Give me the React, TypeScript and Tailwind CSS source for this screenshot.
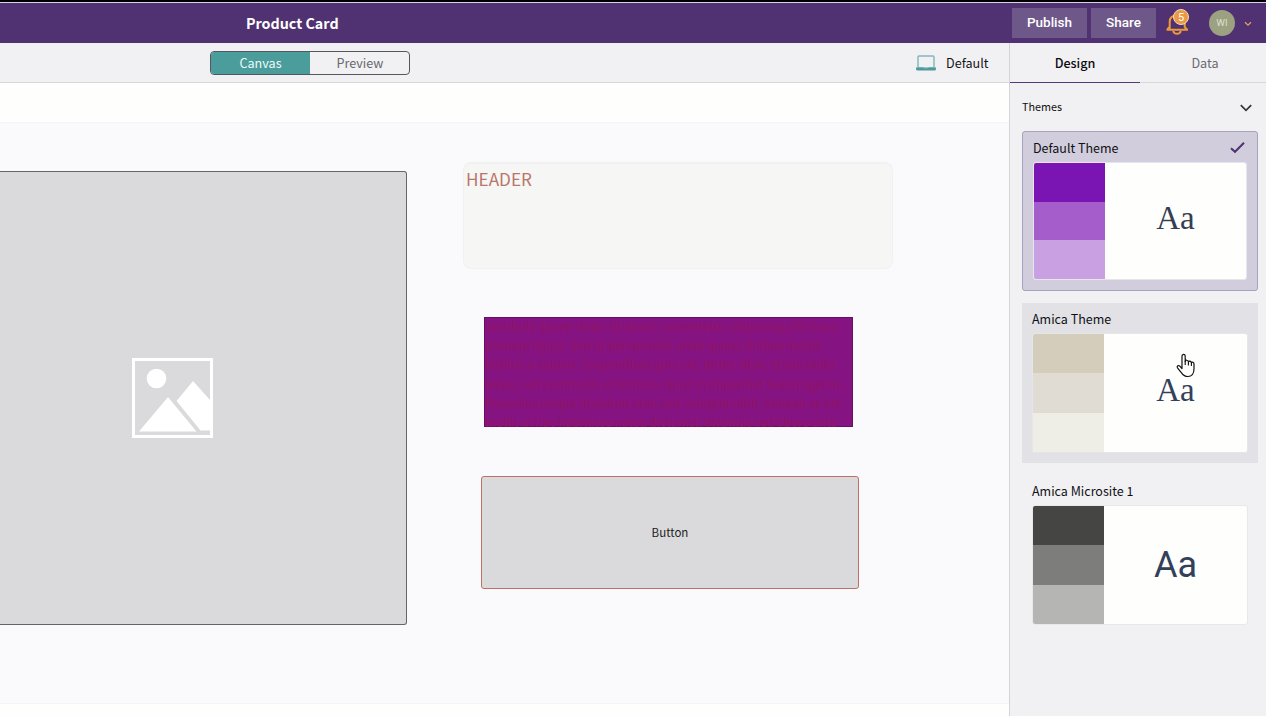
import React from "react";

type Theme = {
  name: string;
  card: string;
  title: string;
  preview: string;
  swatches: string[];
  sample: string;
  selected?: boolean;
  hovered?: boolean;
};

const themes: Theme[] = [
  {
    name: "Default Theme",
    card: "h-[160px] border-[#a9a2bd] bg-[#d2cddd] rounded-[3px] px-[10px]",
    title: "h-[30px] pt-[3px]",
    preview: "h-[118px] border-[#e8e5ef] w-[214px]",
    swatches: ["bg-[#7a15b4]", "bg-[#a45dca]", "bg-[#c9a1e3]"],
    sample: "pb-[6px] font-['Liberation_Serif',serif] text-[33px] text-[#363f50]",
    selected: true,
  },
  {
    name: "Amica Theme",
    card: "mt-[12px] h-[160px] border-[#e1e1e6] bg-[#e1e1e6] px-[9px]",
    title: "h-[29px] pt-[2px]",
    preview: "h-[120px] border-[#e6e6e9] w-[216px]",
    swatches: ["bg-[#d5cdbb]", "bg-[#e0dcd3]", "bg-[#eeede6]"],
    sample: "pb-[6px] font-['Liberation_Serif',serif] text-[33px] text-[#33405a]",
    hovered: true,
  },
  {
    name: "Amica Microsite 1",
    card: "mt-[12px] h-[160px] border-transparent px-[9px]",
    title: "h-[29px] pt-[2px]",
    preview: "h-[120px] border-[#e8e8e9] w-[216px]",
    swatches: ["bg-[#454543]", "bg-[#7d7d7b]", "bg-[#b5b5b3]"],
    sample: "font-[Roboto,sans-serif] text-[36px] text-[#33405a]",
  },
];

const copy = [
  "Vestibule ipsum dolor sit amet, consectetur adipiscing elit nunc",
  "posuere ligula. Sed ut perspiciatis unde quam, finibus mattis",
  "facilisis a sapien. Suspendisse quis nec tortor vitae. Etiam nulla",
  "tellus, sed commodo et fermen. Nunc in imperdiet lorem eget in.",
  "Phasellus neque tincidunt erat, sed volutpat nibh. Aenean ac est",
  "mollis in hac habitasse natoa dictumst. Vivamus sed libero ante",
];

function ThemeCard({ t }: { t: Theme }) {
  return (
    <div className={`w-[236px] border ${t.card}`}>
      <div className={`flex items-center justify-between text-[12.5px] leading-[20px] text-[#101014] ${t.title}`}>
        <span className="pb-[2px]">{t.name}</span>
        {t.selected && (
          <svg className="mb-[2px] mr-[2px]" width="15" height="13" viewBox="0 0 15 13" fill="none">
            <path d="M1 7.2 L5 10.8 L14 1.8" stroke="#4f3272" strokeWidth="2" />
          </svg>
        )}
      </div>
      <div className={`relative flex overflow-hidden rounded-[3px] border bg-[#fefefd] ${t.preview}`}>
        <div className="flex w-[71px] flex-col">
          {t.swatches.map((s) => (
            <div key={s} className={`flex-1 ${s}`} />
          ))}
        </div>
        <div className={`flex flex-1 items-center justify-center leading-none ${t.sample}`}>Aa</div>
        {t.hovered && (
          <svg className="absolute left-[143px] top-[19px]" width="20" height="25" viewBox="0 0 20 25">
            <path
              d="M6 14V3.2C6 .7 9.2.7 9.2 3.2V8.4C9.4 6.7 12.2 6.8 12.4 9C12.9 7.6 15.2 7.9 15.4 9.9C16.1 8.7 18 9.1 18 11V16C18 21 15.5 23.5 12 23.5C8.5 23.5 7 22 5.5 19.8L1.5 14.8C.5 13.2 2.6 11.8 3.8 13.1L6 15.5Z"
              fill="#fff"
              stroke="#111"
              strokeWidth="1.2"
              strokeLinejoin="round"
            />
            <path d="M9.2 8V12M12.4 9V12.5M15.4 10V13" stroke="#111" strokeWidth="1.1" />
          </svg>
        )}
      </div>
    </div>
  );
}

export default function App() {
  return (
    <div className="flex h-[716px] w-[1266px] flex-col overflow-hidden bg-white font-['Noto_Sans_CJK_SC','Source_Sans_Pro',sans-serif]">
      <div className="h-[3px] shrink-0 border-b border-[#d9d5de] bg-black" />
      <header className="flex h-[40px] shrink-0 items-center bg-[#503171]">
        <h1 className="ml-[246px] w-[766px] text-[14.3px] font-bold leading-[20px] text-white">Product Card</h1>
        <div className="flex gap-[4px] font-[Roboto,sans-serif] text-[13.5px] font-medium text-white">
          <button className="h-[30px] w-[75px] bg-[#6e5889] pb-px">Publish</button>
          <button className="h-[30px] w-[65px] bg-[#6e5889] pb-px">Share</button>
        </div>
        <div className="relative ml-[10px] h-[28px] w-[24px]">
          <svg width="24" height="28" viewBox="0 0 24 28" fill="none">
            <path d="M.5 20.8H22M3.7 20.5V13C3.7 9 6.5 6.3 11.5 6.3C16 6.3 18.7 9 18.7 13V18L20.8 20.5M3.5 18L1.3 20.5" stroke="#eb9a3b" strokeWidth="2" />
            <path d="M7.3 21.8C8 25.8 14 25.8 14.7 21.8" stroke="#eb9a3b" strokeWidth="2" />
          </svg>
          <span className="absolute left-[7px] top-0 flex h-[16px] w-[16px] items-center justify-center rounded-full border border-[#f3ddc4] bg-[#eb9a43] font-[Roboto,sans-serif] text-[11px] leading-none text-white">
            5
          </span>
        </div>
        <div className="ml-[19px] flex h-[26px] w-[26px] items-center justify-center rounded-full bg-[#9ca181] font-['Open_Sans',sans-serif] text-[9px] text-[#e6e8dc]">
          WI
        </div>
        <svg className="ml-[9px] mt-[2px]" width="8" height="6" viewBox="0 0 8 6" fill="none">
          <path d="M1 1.2L4 4.2L7 1.2" stroke="#dba35c" strokeWidth="1.3" />
        </svg>
      </header>

      <div className="flex min-h-0 flex-1">
        <main className="flex w-[1009px] flex-col bg-[#fefefd]">
          <div className="flex h-[40px] shrink-0 items-center border-b border-[#d8d8da] bg-[#f1f1f3] text-[12.6px] leading-[20px]">
            <div className="ml-[210px] flex h-[24px] w-[200px] overflow-hidden rounded-[4px] border border-[#56565e]">
              <button className="w-[99px] bg-[#4a9d9b] pt-px text-[#eefafa]">Canvas</button>
              <button className="flex-1 pl-px pt-px text-[#67676e]">Preview</button>
            </div>
            <svg className="ml-[506px]" width="20" height="16" viewBox="0 0 20 16" fill="none">
              <rect x="2" y="1" width="16" height="12" rx="1" stroke="#82b4bd" strokeWidth="1.4" />
              <path d="M0 12.5H7L8 13.2H12L13 12.5H20V14Q20 15.5 18.5 15.5H1.5Q0 15.5 0 14Z" fill="#4a9d9b" />
            </svg>
            <span className="ml-[10px] pt-px text-[#141418]">Default</span>
          </div>

          <div className="mt-[39px] flex h-[582px] shrink-0 items-start border-y border-[#f4f4f8] bg-[#fafafd]">
            <div className="mt-[48px] flex h-[454px] w-[407px] items-center rounded-r-[3px] border border-l-0 border-[#656568] bg-[#dadadc]">
              <svg className="ml-[132px]" width="81" height="80" viewBox="0 0 81 80">
                <rect x="1.5" y="1.5" width="78" height="77" fill="none" stroke="#fff" strokeWidth="3" />
                <circle cx="24.5" cy="20.5" r="9.8" fill="#fff" />
                <path d="M36 39L7 73.5H64.5ZM61 23L44.5 43L68.5 72.5H78V42Z" fill="#fff" />
              </svg>
            </div>
            <div className="ml-[56px] flex flex-col">
              <div className="mt-[39px] h-[107px] w-[430px] rounded-[8px] border border-t-2 border-[#f1f1f1] bg-[#f6f6f5] pl-[2px] pt-[5px] text-[17.2px] leading-[20px] text-[#b9766b]">
                HEADER
              </div>
              <div className="ml-[21px] mt-[48px] h-[110px] w-[369px] border border-[#661061] bg-[#861382] text-[12px] leading-[19.3px] text-[#901463]">
                <div className="-mt-[2px]">
                  {copy.map((line) => (
                    <p key={line} className="h-[19.2px] whitespace-nowrap">{line}</p>
                  ))}
                </div>
              </div>
              <button className="ml-[18px] mt-[49px] h-[113px] w-[378px] rounded-[3px] border border-[#bd7063] bg-[#dadadc] pb-[2px] text-[11.5px] leading-[18px] text-[#1c1c20]">
                Button
              </button>
            </div>
          </div>
        </main>

        <aside className="w-[257px] border-l border-[#d4d4d7] bg-[#f1f1f3]">
          <div className="flex h-[40px] text-[12.6px] leading-[20px]">
            <button className="w-[130px] border-b border-[#56397a] pt-px font-medium text-[#0c0c10]">Design</button>
            <button className="flex-1 border-b border-[#d8d8da] pl-[4px] pt-px text-[#69696f]">Data</button>
          </div>
          <div className="flex h-[48px] items-center justify-between pl-[12px] pr-[14px] text-[10.8px] leading-[18px] text-[#111]">
            <span className="pb-[2px]">Themes</span>
            <svg className="mt-px" width="12" height="8" viewBox="0 0 12 8" fill="none">
              <path d="M.8 1.2L6 6.4L11.2 1.2" stroke="#333338" strokeWidth="1.7" />
            </svg>
          </div>
          <div className="ml-[12px]">
            {themes.map((t) => (
              <ThemeCard key={t.name} t={t} />
            ))}
          </div>
        </aside>
      </div>
    </div>
  );
}
